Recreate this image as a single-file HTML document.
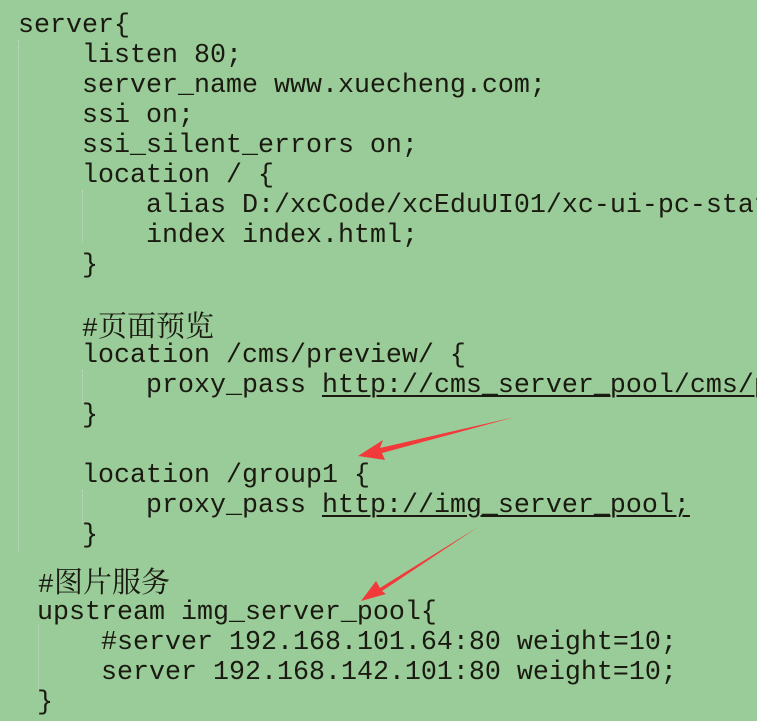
<!DOCTYPE html>
<html><head><meta charset="utf-8"><style>
html,body{margin:0;padding:0;}
body{width:757px;height:721px;background:#99cc99;position:relative;overflow:hidden;
font-family:"Liberation Mono","Noto Sans CJK SC",monospace;font-size:26.67px;color:#1a1a10;}
#w{position:absolute;left:0;top:0;width:757px;height:721px;overflow:hidden;}
.l{position:absolute;white-space:pre;line-height:30px;height:30px;}
.u{text-decoration:underline;text-decoration-thickness:2px;text-underline-offset:3px;}
.c{font-family:"Noto Serif CJK SC","Noto Sans CJK SC",serif;font-size:29px;}
.g{position:absolute;width:0;border-left:1px dotted #c8d8c8;}
</style></head><body><div id="w">
<div class="g" style="left:18px;top:40px;height:512px"></div>
<div class="g" style="left:82px;top:190px;height:52px"></div>
<div class="g" style="left:82px;top:370px;height:32px"></div>
<div class="g" style="left:82px;top:490px;height:32px"></div>
<div class="g" style="left:38px;top:625px;height:65px"></div>

<div class="l" style="left:18px;top:11px">server{</div>
<div class="l" style="left:82px;top:41px">listen 80;</div>
<div class="l" style="left:82px;top:71px">server_name www.xuecheng.com;</div>
<div class="l" style="left:82px;top:101px">ssi on;</div>
<div class="l" style="left:82px;top:131px">ssi_silent_errors on;</div>
<div class="l" style="left:82px;top:161px">location / {</div>
<div class="l" style="left:146px;top:191px">alias D:/xcCode/xcEduUI01/xc-ui-pc-stat</div>
<div class="l" style="left:146px;top:221px">index index.html;</div>
<div class="l" style="left:82px;top:251px">}</div>
<div class="l" style="left:82px;top:310px">#<span class="c">页面预览</span></div>
<div class="l" style="left:82px;top:341px">location /cms/preview/ {</div>
<div class="l" style="left:146px;top:371px">proxy_pass <span class="u">http://cms_server_pool/cms/p</span></div>
<div class="l" style="left:82px;top:401px">}</div>
<div class="l" style="left:82px;top:461px">location /group1 {</div>
<div class="l" style="left:146px;top:491px">proxy_pass <span class="u">http://img_server_pool;</span></div>
<div class="l" style="left:82px;top:521px">}</div>
<div class="l" style="left:38px;top:566px">#<span class="c">图片服务</span></div>
<div class="l" style="left:37px;top:598px">upstream img_server_pool{</div>
<div class="l" style="left:101px;top:628px">#server 192.168.101.64:80 weight=10;</div>
<div class="l" style="left:101px;top:658px">server 192.168.142.101:80 weight=10;</div>
<div class="l" style="left:37px;top:688px">}</div>

<svg width="757" height="721" style="position:absolute;left:0;top:0">
<polygon points="515,417 380,448 383,440 358,456 385,460 382,453" fill="#f23a3a"/>
<polygon points="478,527 380,588 376,581 361,601 386,594 382,591" fill="#f23a3a"/>
</svg>
</div></body></html>
